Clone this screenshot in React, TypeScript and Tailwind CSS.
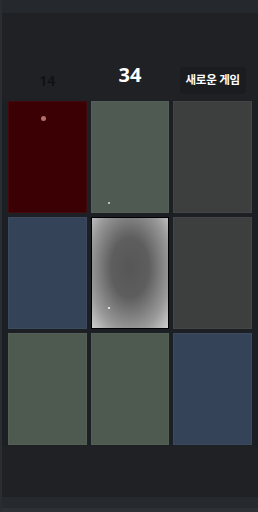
import React from 'react';

type Cell = { bg: string; dot?: string };

const cells: Cell[] = [
    { bg: 'bg-[#3b0003]', dot: 'left-[33px] top-[15px] bg-[#b86b6b] w-[5px] h-[5px] blur-[0.5px]' },
    { bg: 'bg-[#4f5b52]', dot: 'left-[17px] top-[101px] bg-[#d8dcd8] w-[2px] h-[2px]' },
    { bg: 'bg-[#3d3e3e]' },
    { bg: 'bg-[#354358]' },
    { bg: 'special' },
    { bg: 'bg-[#3d3e3e]' },
    { bg: 'bg-[#4e5a50]' },
    { bg: 'bg-[#4e5a50]' },
    { bg: 'bg-[#344358]' },
];

export default function App() {
    return (
        <div className="w-[258px] h-[512px] bg-[#1f2125] flex flex-col border-l-2 border-[#2a2e33]" style={{ fontFamily: '"Noto Sans", "Noto Sans CJK KR", sans-serif' }}>
            <div className="h-[13px] bg-[#25292d] shrink-0" />
            <div className="h-[47px] shrink-0" />
            <div className="grid grid-cols-3 gap-1 px-[6px] h-[40px] items-center shrink-0">
                <div className="text-center text-[14px] font-semibold text-[#0f1113]">14</div>
                <div className="text-center text-[20px] font-bold text-white -mt-[10px]">34</div>
                <div className="flex justify-center">
                    <button className="bg-[#1a1c1f] text-white text-[11.5px] font-bold px-[6px] h-[27px] rounded-sm tracking-tight">새로운 게임</button>
                </div>
            </div>
            <div className="grid grid-cols-3 gap-1 px-[6px] bg-[#1c2025] py-[1px]">
                {cells.map((c, i) =>
                    c.bg === 'special' ? (
                        <div
                            key={i}
                            className="relative h-[112px] border border-black"
                            style={{ background: 'radial-gradient(ellipse at 50% 45%, #565656 0%, #5e5e5e 35%, #9a9a9a 75%, #cfcfcf 100%)' }}
                        >
                            <div className="absolute left-[16px] top-[89px] w-[2px] h-[2px] bg-[#e0e0e0]" />
                        </div>
                    ) : (
                        <div key={i} className={`relative h-[112px] ${c.bg} shadow-[inset_0_0_0_1px_rgba(255,255,255,0.04)]`}>
                            {c.dot && <div className={`absolute rounded-full ${c.dot}`} />}
                        </div>
                    )
                )}
            </div>
            <div className="flex-1" />
            <div className="h-[15px] bg-[#262a2e] border-b-4 border-[#2d3136] shrink-0" />
        </div>
    );
}
